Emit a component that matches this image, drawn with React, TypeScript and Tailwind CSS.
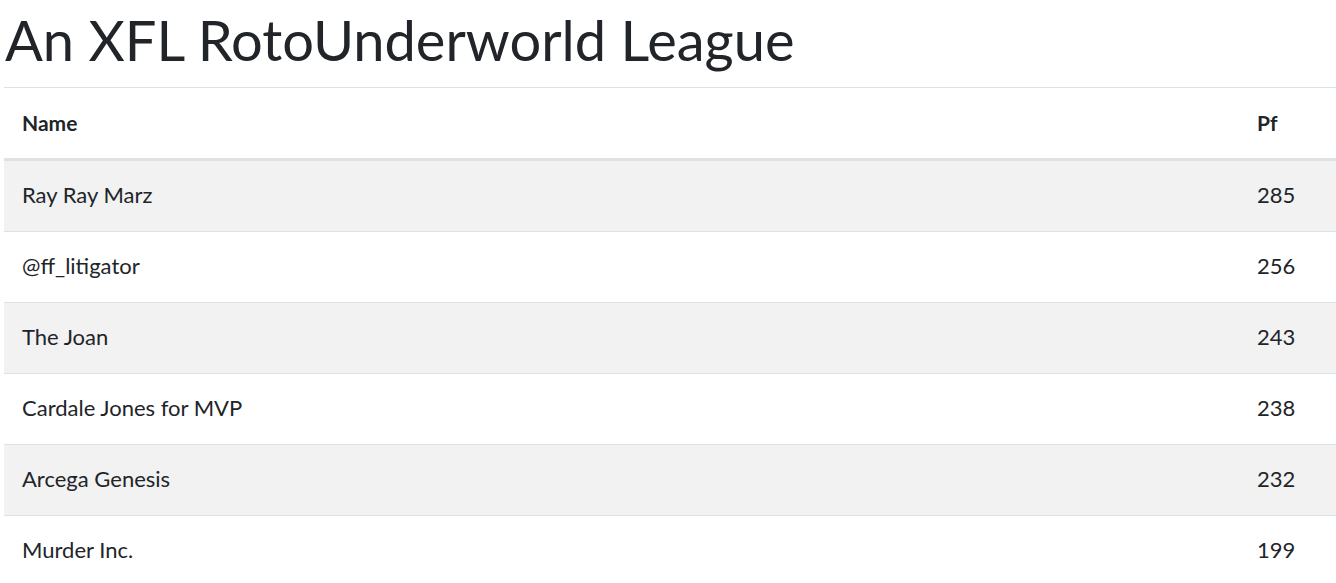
const rows = [
  { name: "Ray Ray Marz", pf: 285 },
  { name: "@ff_litigator", pf: 256 },
  { name: "The Joan", pf: 243 },
  { name: "Cardale Jones for MVP", pf: 238 },
  { name: "Arcega Genesis", pf: 232 },
  { name: "Murder Inc.", pf: 199 },
];

export default function App() {
  return (
    <div
      className="h-[583px] overflow-hidden bg-white pl-[4px] text-[#212529]"
      style={{ fontFamily: "Lato, 'Noto Sans', sans-serif" }}
    >
      <h1 className="h-[87px] pl-[1px] pt-[7px] text-[56px] leading-[66px] font-normal">
        An XFL RotoUnderworld League
      </h1>
      <div className="w-[1340px]">
        <div className="grid h-[74px] grid-cols-[1235px_1fr] items-center border-t border-b-[3px] border-[#dee2e6] text-[21px] font-bold">
          <div className="pl-[18px]">Name</div>
          <div className="pl-[18px]">Pf</div>
        </div>
        {rows.map((r, i) => (
          <div
            key={r.name}
            className={`grid grid-cols-[1235px_1fr] items-center pb-[3px] text-[22px] ${
              i === 0 ? "h-[70px]" : "h-[71px] border-t border-[#dee2e6]"
            } ${i % 2 === 0 ? "bg-[#f2f2f2]" : "bg-white"}`}
          >
            <div className="pl-[18px]">{r.name}</div>
            <div className="pl-[18px]">{r.pf}</div>
          </div>
        ))}
      </div>
    </div>
  );
}
